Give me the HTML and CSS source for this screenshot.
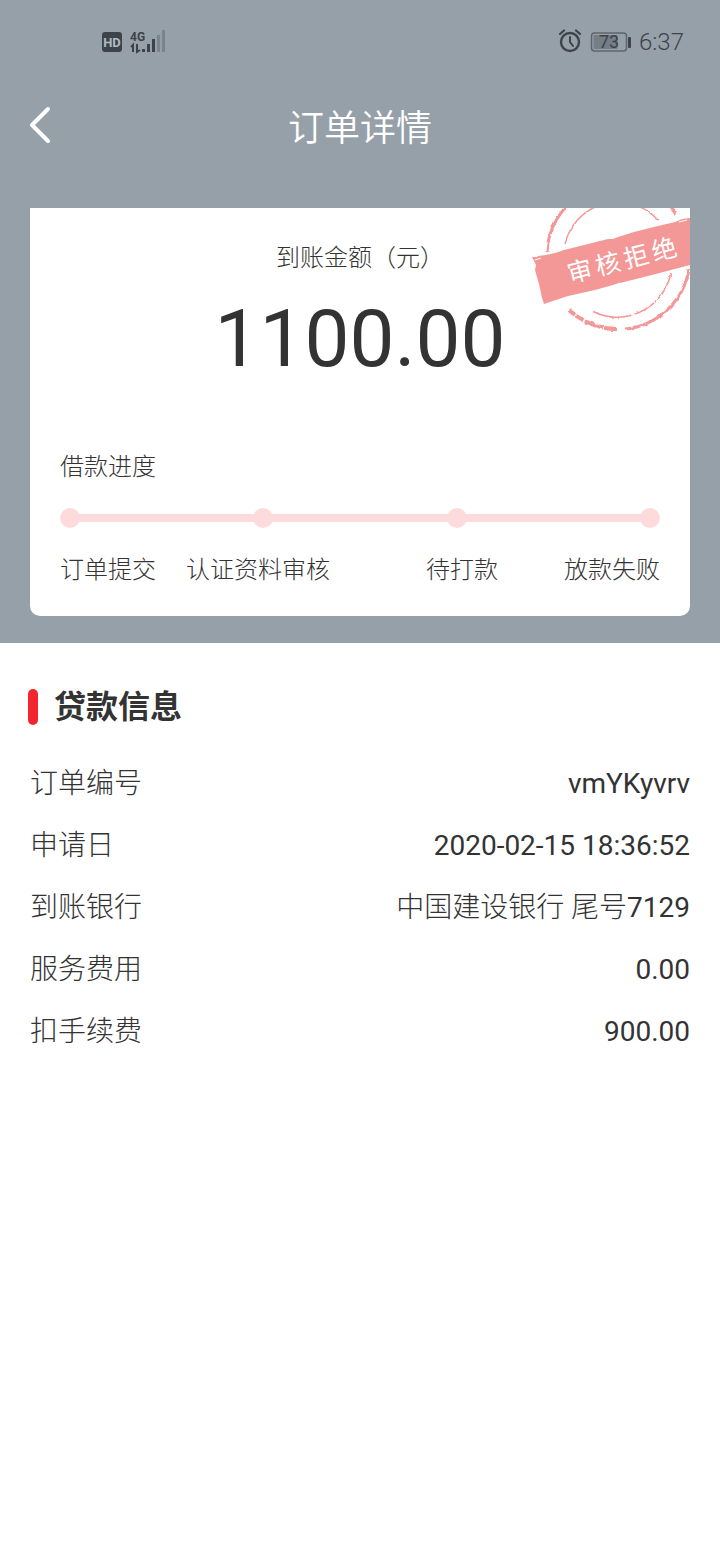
FILE: index.html
```html
<!DOCTYPE html>
<html lang="zh-CN">
<head>
    <meta charset="UTF-8">
    <meta name="viewport" content="width=device-width, initial-scale=1.0">
    <title>订单详情</title>
    <link rel="stylesheet" href="styles.css">
</head>
<body>
    <div class="top">
        <div class="status-bar">
            <div class="status-left">
                <svg class="icon-hd" width="22" height="22" viewBox="0 0 22 22">
                    <rect x="1" y="1" width="20" height="20" rx="3" fill="#3d434a"/>
                    <text x="11" y="16" text-anchor="middle">HD</text>
                </svg>
                <svg class="icon-signal" width="38" height="26" viewBox="0 0 38 26">
                    <text x="1" y="12">4G</text>
                    <path d="M2 18l2-2v7M8 15v8l3-2" fill="none" stroke="#3d434a" stroke-width="2"/>
                    <rect x="13" y="20" width="3" height="3" fill="#3d434a"/>
                    <rect x="18" y="15" width="3" height="8" fill="#3d434a"/>
                    <rect x="23" y="10" width="3" height="13" fill="#3d434a"/>
                    <rect x="28" y="6" width="3" height="17" fill="#7b838c"/>
                    <rect x="33" y="1" width="3" height="22" fill="#7b838c"/>
                </svg>
            </div>
            <div class="status-right">
                <svg width="24" height="26" viewBox="0 0 24 26" fill="none" stroke="#3d434a" stroke-linecap="round">
                    <circle cx="13" cy="13" r="9" stroke-width="2.4"/>
                    <path d="M13 8v5l3 4" stroke-width="2"/>
                    <path d="M3 5l4-3.500M23 5l-4-3.500" stroke-width="2.200"/>
                </svg>
                <svg class="icon-battery" width="42" height="22" viewBox="0 0 42 22">
                    <rect x="2.500" y="2" width="35" height="18" rx="3" fill="none" stroke="#5d646c" stroke-width="1.500"/>
                    <rect x="4.500" y="4" width="24" height="14" rx="1" fill="#757d86"/>
                    <rect x="39" y="6" width="3" height="11" rx="1" fill="#3d434a"/>
                    <text x="20" y="17" text-anchor="middle">73</text>
                </svg>
                <span class="time">6:37</span>
            </div>
        </div>

        <header class="nav">
            <button class="back" type="button" aria-label="返回">
                <svg width="24" height="40" viewBox="0 0 24 40">
                    <path d="M20 4L4 20l16 16" fill="none" stroke="#fff" stroke-width="4" stroke-linecap="round" stroke-linejoin="round"/>
                </svg>
            </button>
            <h1>订单详情</h1>
        </header>

        <div class="card">
            <svg class="stamp" width="160" height="126" viewBox="0 0 160 126">
                <defs>
                    <filter id="rough" x="-10%" y="-10%" width="120%" height="120%">
                        <feTurbulence type="fractalNoise" baseFrequency="0.2" numOctaves="2" seed="4"/>
                        <feDisplacementMap in="SourceGraphic" scale="3" xChannelSelector="R" yChannelSelector="G"/>
                    </filter>
                </defs>
                <g filter="url(#rough)" fill="none" stroke="#f49797">
                    <path d="M17 44A72 72 0 0 1 38 -3M128 -11A72 72 0 0 1 146 6" stroke-width="3"/>
                    <path d="M159 61A72 72 0 0 1 95 121" stroke-width="3"/>
                    <path d="M86 121A72 72 0 0 1 39 102" stroke-width="4" stroke-dasharray="12 1 19 2 9 1"/>
                    <path d="M35 36A55 55 0 0 1 70 -3M105 -3A55 55 0 0 1 128 12" stroke-width="1.500"/>
                    <path d="M141 65A55 55 0 0 1 54 98" stroke-width="1.500" stroke-dasharray="34 1 23 2 40"/>
                </g>
                <path fill="#f49797" d="M2 49L7 49 8 48 16 47 25 45 34 42 78 31 83 31 88 29 104 24 128 18 145 14 152 11 160 10V57L122 67 90 75 65 82 38 88 14 96 12 90 9 76 5 62 6 57 4 53z"/>
                <path fill="none" stroke="#fff" stroke-width="1" d="M5 52l6-2M80 30l5-1M85 77l5-2M149 14l8-2"/>
                <text transform="translate(40 75) rotate(-14.500)">审核拒绝</text>
            </svg>

            <p class="amount-label">到账金额（元）</p>
            <p class="amount">1100.00</p>

            <h2 class="progress-title">借款进度</h2>
            <div class="track">
                <span class="dot"></span>
                <span class="dot"></span>
                <span class="dot"></span>
                <span class="dot"></span>
            </div>
            <ol class="steps">
                <li>订单提交</li>
                <li>认证资料审核</li>
                <li>待打款</li>
                <li>放款失败</li>
            </ol>
        </div>
    </div>

    <section class="info">
        <h2 class="info-title">贷款信息</h2>
        <dl>
            <div class="row">
                <dt>订单编号</dt>
                <dd>vmYKyvrv</dd>
            </div>
            <div class="row">
                <dt>申请日</dt>
                <dd>2020-02-15 18:36:52</dd>
            </div>
            <div class="row">
                <dt>到账银行</dt>
                <dd><span class="bank">中国建设银行 尾号</span>7129</dd>
            </div>
            <div class="row">
                <dt>服务费用</dt>
                <dd>0.00</dd>
            </div>
            <div class="row">
                <dt>扣手续费</dt>
                <dd>900.00</dd>
            </div>
        </dl>
    </section>
</body>
</html>
```
FILE: styles.css
```css
:root {
    --header-color: #96a0a9;
    --text-color: #333333;
    --status-color: #3d434a;
    --accent-color: #f3262d;
    --progress-color: #fddbdc;
}

* {
    box-sizing: border-box;
    margin: 0;
    padding: 0;
}

body {
    background-color: #ffffff;
    color: var(--text-color);
    font-family: Roboto, "Noto Sans CJK SC", sans-serif;
    font-size: 28px;
}

.top {
    background-color: var(--header-color);
    padding-bottom: 27px;
}

.status-bar {
    display: flex;
    justify-content: space-between;
    align-items: center;
    height: 84px;
    padding: 0 36px 0 101px;
}

.status-left,
.status-right {
    display: flex;
    align-items: center;
}

.status-left {
    gap: 6px;
}

.status-right {
    gap: 8px;
}

.icon-hd text {
    fill: #b3bac1;
    font-size: 13px;
    font-weight: 700;
}

.icon-signal text {
    fill: var(--status-color);
    font-size: 12px;
    font-weight: 700;
}

.icon-battery text {
    fill: var(--status-color);
    font-size: 18px;
}

.time {
    color: var(--status-color);
    font-size: 24px;
    font-weight: 350;
}

.nav {
    position: relative;
    display: flex;
    justify-content: center;
    align-items: center;
    height: 82px;
    margin-bottom: 42px;
}

.nav h1 {
    color: #ffffff;
    font-size: 36px;
    font-weight: 350;
}

.back {
    position: absolute;
    left: 28px;
    top: 21px;
    display: flex;
    border: none;
    background: none;
    cursor: pointer;
}

.card {
    position: relative;
    overflow: hidden;
    margin: 0 30px;
    padding: 32px 30px 28px;
    background-color: #ffffff;
    border-radius: 0 0 10px 10px;
    font-size: 24px;
    font-weight: 300;
    line-height: 36px;
}

.stamp {
    position: absolute;
    top: 0;
    right: 0;
}

.stamp text {
    fill: #ffffff;
    font-size: 25px;
    font-weight: 400;
    letter-spacing: 4px;
}

.amount-label {
    text-align: center;
}

.amount {
    margin: 23px 0 70px;
    font-size: 80px;
    font-weight: 400;
    line-height: 80px;
    text-align: center;
}

.progress-title {
    margin-bottom: 23px;
    font-size: 24px;
    font-weight: 300;
}

.track {
    display: flex;
    justify-content: space-between;
    margin-bottom: 24px;
    background: linear-gradient(var(--progress-color), var(--progress-color)) center / calc(100% - 20px) 8px no-repeat;
}

.dot {
    width: 20px;
    height: 20px;
    border-radius: 50%;
    background-color: var(--progress-color);
}

.steps {
    display: flex;
    list-style: none;
}

.steps li {
    flex: 1;
    text-align: center;
}

.steps li:first-child,
.steps li:last-child {
    flex: none;
}

.info {
    padding: 46px 30px;
}

.info-title {
    display: flex;
    align-items: center;
    gap: 16px;
    margin: 0 0 28px -2px;
    font-size: 32px;
    font-weight: 700;
    line-height: 36px;
}

.info-title::before {
    content: "";
    width: 10px;
    height: 36px;
    border-radius: 5px;
    background-color: var(--accent-color);
}

.row {
    display: flex;
    justify-content: space-between;
    line-height: 62px;
}

.row dt,
.bank {
    font-weight: 300;
}
```
